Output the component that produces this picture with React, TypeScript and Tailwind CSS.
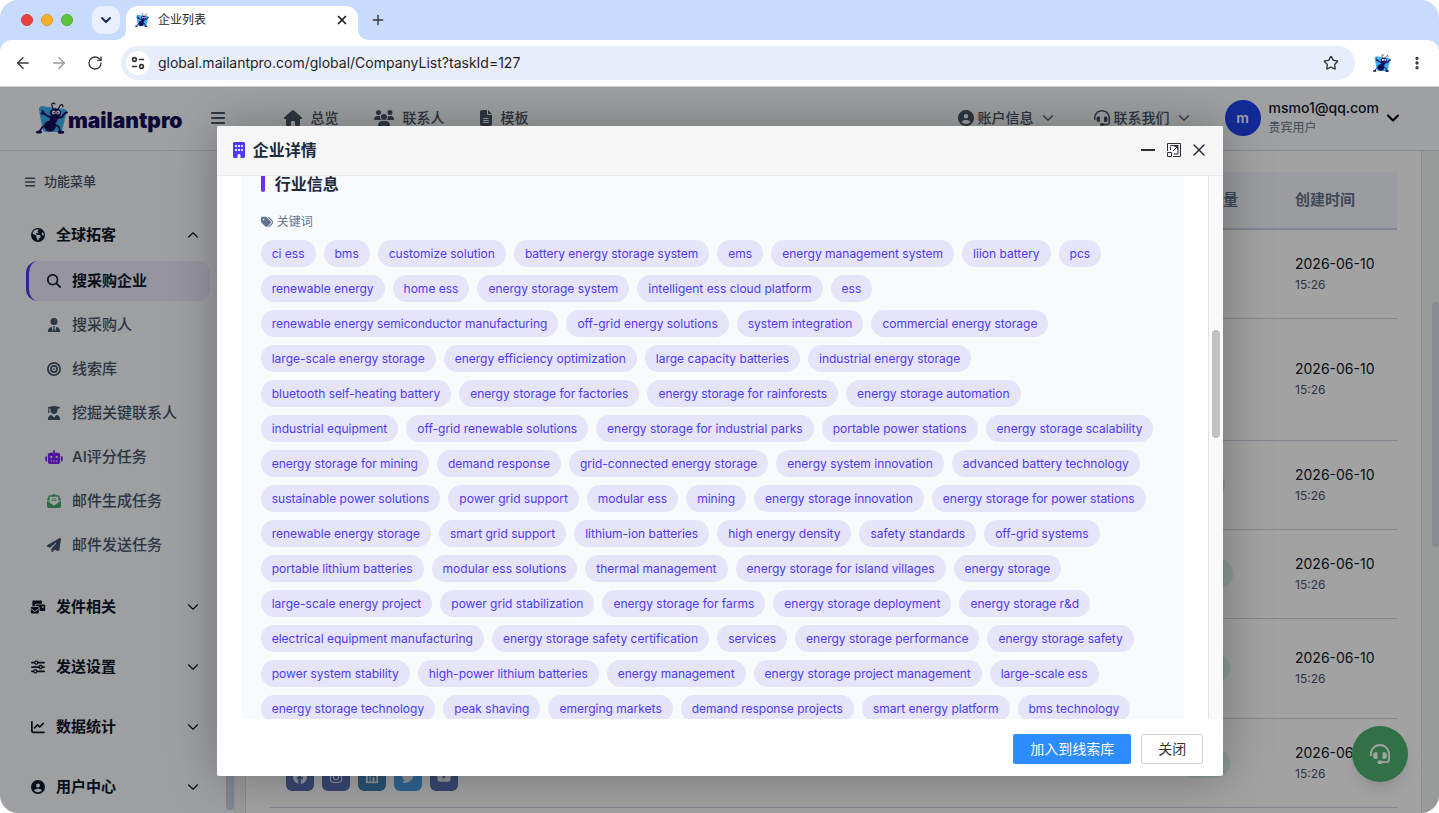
import type { ReactNode } from 'react'
import type { IconType } from 'react-icons'
import {
  FaBars,
  FaBuilding,
  FaBullseye,
  FaChartLine,
  FaCircleUser,
  FaEarthAmericas,
  FaEnvelopeOpenText,
  FaEnvelopesBulk,
  FaFacebook,
  FaFileLines,
  FaHeadset,
  FaHouse,
  FaInstagram,
  FaLinkedin,
  FaMagnifyingGlass,
  FaPaperPlane,
  FaRobot,
  FaSliders,
  FaTags,
  FaTwitter,
  FaUserGraduate,
  FaUsers,
  FaUserTie,
  FaYoutube,
} from 'react-icons/fa6'
import {
  ArrowLeft,
  ArrowRight,
  ChevronDown,
  ChevronUp,
  EllipsisVertical,
  Plus,
  RotateCw,
  Star,
  X,
} from 'lucide-react'

const KEYWORDS = [
  'ci ess', 'bms', 'customize solution', 'battery energy storage system', 'ems',
  'energy management system', 'liion battery', 'pcs', 'renewable energy', 'home ess',
  'energy storage system', 'intelligent ess cloud platform', 'ess',
  'renewable energy semiconductor manufacturing', 'off-grid energy solutions',
  'system integration', 'commercial energy storage', 'large-scale energy storage',
  'energy efficiency optimization', 'large capacity batteries', 'industrial energy storage',
  'bluetooth self-heating battery', 'energy storage for factories',
  'energy storage for rainforests', 'energy storage automation', 'industrial equipment',
  'off-grid renewable solutions', 'energy storage for industrial parks',
  'portable power stations', 'energy storage scalability', 'energy storage for mining',
  'demand response', 'grid-connected energy storage', 'energy system innovation',
  'advanced battery technology', 'sustainable power solutions', 'power grid support',
  'modular ess', 'mining', 'energy storage innovation', 'energy storage for power stations',
  'renewable energy storage', 'smart grid support', 'lithium-ion batteries',
  'high energy density', 'safety standards', 'off-grid systems',
  'portable lithium batteries', 'modular ess solutions', 'thermal management',
  'energy storage for island villages', 'energy storage', 'large-scale energy project',
  'power grid stabilization', 'energy storage for farms', 'energy storage deployment',
  'energy storage r&d', 'electrical equipment manufacturing',
  'energy storage safety certification', 'services', 'energy storage performance',
  'energy storage safety', 'power system stability', 'high-power lithium batteries',
  'energy management', 'energy storage project management', 'large-scale ess',
  'energy storage technology', 'peak shaving', 'emerging markets',
  'demand response projects', 'smart energy platform', 'bms technology',
]

const SUB_ITEMS: { label: string; icon: IconType; color?: string; active?: boolean }[] = [
  { label: '搜采购企业', icon: FaMagnifyingGlass, active: true },
  { label: '搜采购人', icon: FaUserTie },
  { label: '线索库', icon: FaBullseye },
  { label: '挖掘关键联系人', icon: FaUserGraduate },
  { label: 'AI评分任务', icon: FaRobot, color: 'text-violet-600' },
  { label: '邮件生成任务', icon: FaEnvelopeOpenText, color: 'text-[#41a868]' },
  { label: '邮件发送任务', icon: FaPaperPlane },
]

const GROUPS: { label: string; icon: IconType }[] = [
  { label: '发件相关', icon: FaEnvelopesBulk },
  { label: '发送设置', icon: FaSliders },
  { label: '数据统计', icon: FaChartLine },
  { label: '用户中心', icon: FaCircleUser },
]

const ROWS = [
  { height: 'h-[89px]', badge: '' },
  { height: 'h-[122px]', badge: '' },
  { height: 'h-[89px]', badge: 'w-[47px]' },
  { height: 'h-[89px]', badge: 'w-[55px]' },
  { height: 'h-[100px]', badge: 'w-[52px]' },
  { height: 'h-[89px]', badge: 'w-[52px]' },
]

const SOCIALS: { name: string; icon: IconType; bg: string }[] = [
  { name: 'Facebook', icon: FaFacebook, bg: 'bg-[#5b70b4]' },
  { name: 'Instagram', icon: FaInstagram, bg: 'bg-[#5b70b4]' },
  { name: 'LinkedIn', icon: FaLinkedin, bg: 'bg-[#3f82b5]' },
  { name: 'Twitter', icon: FaTwitter, bg: 'bg-[#4a9fe6]' },
  { name: 'YouTube', icon: FaYoutube, bg: 'bg-[#5b70b4]' },
]

function AntLogo({ className }: { className: string }) {
  return (
    <svg viewBox="0 0 32 32" className={className} aria-hidden="true">
      <path d="M6 4Q16 6 28 7Q31.500 7.500 30.500 10.500L26.500 27Q25.500 30 22.500 30H10Q7 30 6.500 27L3 8Q2.800 4.300 6 4Z" fill="#3db2f2" />
      <g fill="#150d5c">
        <ellipse cx="14" cy="24" rx="5.900" ry="5.600" />
        <ellipse cx="17.500" cy="17.500" rx="3.800" ry="4" />
        <ellipse cx="19.500" cy="11" rx="5.600" ry="4.500" />
        <ellipse cx="3" cy="30" rx="3" ry="1.600" />
        <ellipse cx="25" cy="30.200" rx="3.200" ry="1.600" />
      </g>
      <g fill="none" stroke="#150d5c" strokeLinecap="round" strokeLinejoin="round">
        <path d="M16 15.500 11.500 14 8 11.500M8 11.500 6.500 8.800M8 11.500H5.500M20.500 16.500 26 15l3-4M29 11l2-.5" strokeWidth="1.900" />
        <path d="M10 23 6 25.500l-2.500 4M18 22l5 3 1 4.500" strokeWidth="1.600" />
        <path d="M17.500 7C16 5 15.500 3 16 1.500Q18 .5 19 2M22.500 7c.5-2.500 1.500-4 3.500-4.500q1.500 1 .7 2.500" strokeWidth="1.100" />
      </g>
      <circle cx="17.800" cy="10.500" r="1.900" fill="#fff" />
      <circle cx="22" cy="10.500" r="1.900" fill="#fff" />
      <circle cx="18.200" cy="10.700" r=".8" fill="#150d5c" />
      <circle cx="21.700" cy="10.700" r=".8" fill="#150d5c" />
    </svg>
  )
}

function BrowserBar() {
  return (
    <div className="shrink-0 bg-[#c9dbfd]">
      <div className="flex h-10 items-end">
        <div className="flex h-10 items-center gap-2 pl-[21px]">
          <span className="h-3 w-3 rounded-full border border-[#d23c3a] bg-[#e9413f]" />
          <span className="h-3 w-3 rounded-full border border-[#dc9b28] bg-[#f5ae2b]" />
          <span className="h-3 w-3 rounded-full border border-[#4fae2c] bg-[#5cc436]" />
        </div>
        <button
          type="button"
          aria-label="Search tabs"
          className="mb-1.5 ml-[19px] flex h-7 w-7 items-center justify-center rounded-[10px] bg-[#e8effd] text-[#1b2b57]"
        >
          <ChevronDown className="h-4 w-4" strokeWidth={3} />
        </button>
        <div className="relative ml-1.5 flex h-[34px] w-[232px] items-center rounded-t-xl bg-white px-[9px] pb-1.5">
          <svg viewBox="0 0 10 10" className="absolute bottom-0 -left-2.5 h-2.5 w-2.5" aria-hidden="true">
            <path d="M10 0V10H0A10 10 0 0 0 10 0Z" fill="#fff" />
          </svg>
          <svg viewBox="0 0 10 10" className="absolute -right-2.5 bottom-0 h-2.5 w-2.5" aria-hidden="true">
            <path d="M0 0V10H10A10 10 0 0 1 0 0Z" fill="#fff" />
          </svg>
          <AntLogo className="h-3.5 w-3.5" />
          <span className="ml-[9px] flex-1 text-xs text-[#1f1f1f]">企业列表</span>
          <button type="button" aria-label="Close tab" className="text-[#1f1f1f]">
            <X className="h-3.5 w-3.5" strokeWidth={3} />
          </button>
        </div>
        <button type="button" aria-label="New tab" className="mb-3 ml-3 text-[#333]">
          <Plus className="h-4 w-4" />
        </button>
      </div>
      <div className="flex h-[47px] items-center rounded-t-xl border-b border-[#cfd2cf] bg-white pr-3.5 pl-3.5">
        <button type="button" aria-label="Back" className="text-[#3c3c3c]">
          <ArrowLeft className="h-[18px] w-[18px]" />
        </button>
        <button type="button" aria-label="Forward" className="ml-[18px] text-[#9b9b9b]">
          <ArrowRight className="h-[18px] w-[18px]" />
        </button>
        <button type="button" aria-label="Reload" className="ml-[19px] text-[#3c3c3c]">
          <RotateCw className="h-4 w-4" />
        </button>
        <div className="ml-[18px] flex h-[34px] flex-1 items-center rounded-full bg-[#e8eef9] pr-4 pl-[5px]">
          <button
            type="button"
            aria-label="Site information"
            className="flex h-6 w-6 items-center justify-center rounded-full bg-white"
          >
            <svg viewBox="0 0 14 14" className="h-3.5 w-3.5" fill="none" stroke="#333" strokeWidth="1.600" strokeLinecap="round" aria-hidden="true">
              <circle cx="3.500" cy="3.500" r="1.900" />
              <path d="M8.500 3.500h4M1.500 10.500h4" />
              <circle cx="10.500" cy="10.500" r="1.900" />
            </svg>
          </button>
          <input
            type="text"
            aria-label="Address"
            defaultValue="global.mailantpro.com/global/CompanyList?taskId=127"
            className="ml-2 min-w-0 flex-1 bg-transparent text-sm text-[#1f1f1f] focus:outline-none"
          />
          <button type="button" aria-label="Bookmark" className="text-[#333]">
            <Star className="h-4 w-4" />
          </button>
        </div>
        <button type="button" aria-label="Extension" className="ml-[18px]">
          <AntLogo className="h-[18px] w-[18px]" />
        </button>
        <button type="button" aria-label="Menu" className="ml-[18px] text-[#333]">
          <EllipsisVertical className="h-4 w-4" strokeWidth={3} />
        </button>
      </div>
    </div>
  )
}

function NavLink({ icon, children }: { icon: ReactNode; children: ReactNode }) {
  return (
    <a href="#" className="flex items-center gap-2 text-sm font-medium text-[#475569]">
      {icon}
      {children}
    </a>
  )
}

function Header() {
  return (
    <header className="flex h-16 shrink-0 items-center border-b border-[#d5dde8] bg-[#fbfcfd] pr-9 pb-0.5 pl-9">
      <a href="#" className="flex items-center">
        <AntLogo className="h-8 w-8" />
        <span className="mt-1.5 text-[21px] leading-7 font-black text-[#150d5c]">mailantpro</span>
      </a>
      <button type="button" aria-label="Toggle menu" className="ml-7 text-[#475569]">
        <FaBars className="h-4 w-4" />
      </button>
      <nav className="ml-[58px] flex items-center gap-9">
        <NavLink icon={<FaHouse className="h-[18px] w-[18px]" />}>总览</NavLink>
        <NavLink icon={<FaUsers className="h-5 w-5" />}>联系人</NavLink>
        <NavLink icon={<FaFileLines className="h-4 w-3" />}>模板</NavLink>
      </nav>
      <div className="ml-auto flex items-center">
        <button type="button" className="flex items-center text-sm font-medium text-[#475569]">
          <FaCircleUser className="mr-1 h-4 w-4" />
          账户信息
          <ChevronDown className="ml-[5px] h-[18px] w-[18px]" strokeWidth={1.5} />
        </button>
        <button type="button" className="ml-[37px] flex items-center text-sm font-medium text-[#475569]">
          <FaHeadset className="mr-1 h-4 w-4" />
          联系我们
          <ChevronDown className="ml-[5px] h-[18px] w-[18px]" strokeWidth={1.5} />
        </button>
        <button type="button" className="ml-8 flex items-center text-left">
          <span className="flex h-9 w-9 items-center justify-center rounded-full bg-[#1f45ee] text-sm font-semibold text-white">
            m
          </span>
          <span className="mr-1 ml-2">
            <span className="block text-sm font-medium text-slate-900">msmo1@qq.com</span>
            <span className="block text-xs leading-5 text-slate-500">贵宾用户</span>
          </span>
          <ChevronDown className="h-5 w-5 text-black" strokeWidth={2.5} />
        </button>
      </div>
    </header>
  )
}

function Sidebar() {
  return (
    <aside className="flex w-[235px] shrink-0 overflow-hidden border-r border-slate-200 bg-[#f8fafc]">
      <div className="min-w-0 flex-1 pr-4 pl-[26px]">
        <div className="-ml-0.5 flex h-[62px] items-center gap-2 text-[13px] font-medium text-slate-600">
          <FaBars className="h-3 w-3" />
          功能菜单
        </div>
        <button type="button" className="flex h-11 w-full items-center pr-2 pl-1 text-[15px] font-semibold text-slate-900">
          <FaEarthAmericas className="mr-2.5 h-3.5 w-4 shrink-0" />
          全球拓客
          <ChevronUp className="ml-auto h-[18px] w-[18px]" strokeWidth={1.5} />
        </button>
        <ul className="mt-1 mb-5 space-y-1">
          {SUB_ITEMS.map(({ label, icon: Icon, color, active }) => (
            <li key={label}>
              <a
                href="#"
                className={
                  active
                    ? 'flex h-10 items-center gap-[9px] rounded-xl border-l-[3px] border-indigo-600 bg-[#eceafb] pl-4 text-[15px] font-semibold text-slate-900'
                    : 'flex h-10 items-center gap-[9px] pl-[19px] text-[15px] font-medium text-slate-600'
                }
              >
                <Icon className={`h-3.5 w-[18px] ${color ?? ''}`} />
                {label}
              </a>
            </li>
          ))}
        </ul>
        <div className="space-y-4">
          {GROUPS.map(({ label, icon: Icon }) => (
            <button
              key={label}
              type="button"
              className="flex h-11 w-full items-center pr-2 pl-1 text-[15px] font-semibold text-slate-900"
            >
              <Icon className="mr-2.5 h-3.5 w-4 shrink-0" />
              {label}
              <ChevronDown className="ml-auto h-[18px] w-[18px]" strokeWidth={1.5} />
            </button>
          ))}
        </div>
      </div>
      <div className="flex w-2 shrink-0 flex-col justify-end pb-[3px]">
        <div className="h-4/5 rounded-full bg-slate-300" />
      </div>
    </aside>
  )
}

function CompanyTable() {
  return (
    <main className="flex min-w-0 flex-1 overflow-hidden bg-[#f1f5f4] pl-2.5">
      <div className="min-w-0 flex-1 border-x border-[#d5dde0] bg-white px-6 pt-[21px]">
        <table className="w-full table-fixed border-collapse text-left">
          <thead>
            <tr className="h-[57px] border-b-2 border-slate-300 bg-[#f3f6fa] text-[15px] text-slate-500">
              <th aria-label="企业" />
              <th className="w-[117px] px-4 font-semibold">
                <span className="block w-[60px] text-right">量</span>
              </th>
              <th className="w-[118px] px-4 font-semibold">创建时间</th>
            </tr>
          </thead>
          <tbody>
            {ROWS.map(({ height, badge }, i) => (
              <tr key={i} className={`${height} border-b border-slate-300`}>
                <td className="px-4 pb-4 align-bottom">
                  {i === ROWS.length - 1 && (
                    <div className="flex gap-2">
                      {SOCIALS.map(({ name, icon: Icon, bg }) => (
                        <a
                          key={name}
                          href="#"
                          aria-label={name}
                          className={`flex h-7 w-7 items-center justify-center rounded-md text-slate-200 ${bg}`}
                        >
                          <Icon className="h-3.5 w-3.5" />
                        </a>
                      ))}
                    </div>
                  )}
                </td>
                <td className="px-4">
                  {badge && <span className={`block h-[30px] rounded-full bg-[#dcf3e8] ${badge}`} />}
                </td>
                <td className="px-4 whitespace-nowrap">
                  <div className="text-sm leading-[22px] text-slate-900">2026-06-10</div>
                  <div className="text-xs leading-5 text-slate-600">15:26</div>
                </td>
              </tr>
            ))}
          </tbody>
        </table>
      </div>
      <div className="w-[17px] shrink-0 pt-[151px] pl-2.5">
        <div className="h-[245px] rounded-full bg-[#d7dee9]" />
      </div>
    </main>
  )
}

function CompanyDialog() {
  return (
    <section
      role="dialog"
      aria-label="企业详情"
      className="flex h-[650px] w-[70%] flex-col overflow-hidden rounded-xs bg-white shadow-[1px_1px_50px_rgba(0,0,0,0.3)]"
    >
      <div className="flex h-[50px] shrink-0 items-center border-b border-[#ebebeb] bg-[#f6f6f6] pr-3.5 pl-4">
        <FaBuilding className="h-4 w-3 text-indigo-600" />
        <h2 className="ml-2 flex-1 text-base font-semibold text-slate-800">企业详情</h2>
        <button type="button" aria-label="最小化" className="flex h-4 w-3.5 items-center">
          <span className="h-0.5 w-full bg-[#2e2d3c]" />
        </button>
        <button type="button" aria-label="最大化" className="ml-3">
          <svg viewBox="0 0 14 14" className="h-3.5 w-3.5" fill="none" stroke="#2e2d3c" aria-hidden="true">
            <path d="M.5 8V.5h13v13H6M3.500 7V3.500M3.500 2.500h7.500v8.500H6.500" />
            <path d="M.5 9.500h4v4h-4zM6 8l4.500-4.500M7.500 3.500h3v3" />
          </svg>
        </button>
        <button type="button" aria-label="关闭窗口" className="ml-2 text-[#2e2d3c]">
          <X className="h-5 w-5" strokeWidth={1.75} />
        </button>
      </div>

      <div className="flex min-h-0 flex-1 overflow-hidden">
        <div className="min-w-0 flex-1 px-6">
          <div className="bg-[#f8fafc] px-5">
            <h3 className="flex h-4 items-center gap-2.5 text-base leading-4 font-semibold text-slate-800">
              <span className="h-full w-1 rounded-b-xs bg-linear-to-r from-indigo-600 to-violet-600" />
              行业信息
            </h3>
            <div className="mt-5 flex h-5 items-center gap-1 text-xs text-slate-500">
              <FaTags className="h-3 w-3" />
              关键词
            </div>
            <div className="mt-2 flex flex-wrap gap-2">
              {KEYWORDS.map((word) => (
                <span key={word} className="h-[27px] rounded-full bg-[#e5e4f9] px-[11px] text-xs leading-[27px] text-indigo-600">
                  {word}
                </span>
              ))}
            </div>
          </div>
        </div>
        <div className="w-[15px] shrink-0 border-l border-[#e3e3e3] bg-[#fafafa] px-[3px] pt-[154px]">
          <div className="h-[108px] rounded-full bg-[#c1c1c1]" />
        </div>
      </div>

      <div className="flex h-[57px] shrink-0 items-center justify-end gap-2.5 px-5 pt-[3px] text-sm">
        <button type="button" className="h-[30px] rounded-xs bg-[#2d8cff] px-[17px] text-white">
          加入到线索库
        </button>
        <button type="button" className="h-[30px] rounded-xs border border-[#d2d2d2] bg-white px-4 text-[#333]">
          关闭
        </button>
      </div>
    </section>
  )
}

export default function App() {
  return (
    <div className="flex h-screen flex-col overflow-hidden rounded-[18px] font-['Inter','Noto_Sans_CJK_SC',sans-serif]">
      <BrowserBar />
      <div className="relative flex min-h-0 flex-1 flex-col">
        <Header />
        <div className="flex min-h-0 flex-1">
          <Sidebar />
          <CompanyTable />
        </div>
        <button
          type="button"
          aria-label="在线客服"
          className="absolute right-[31px] bottom-[31px] flex h-14 w-14 items-center justify-center rounded-full bg-[#4db36d] text-white shadow-lg"
        >
          <FaHeadset className="h-5 w-5" />
        </button>
        <div className="absolute inset-0 flex items-center justify-center bg-black/[0.365] pt-px pl-px">
          <CompanyDialog />
        </div>
      </div>
    </div>
  )
}
